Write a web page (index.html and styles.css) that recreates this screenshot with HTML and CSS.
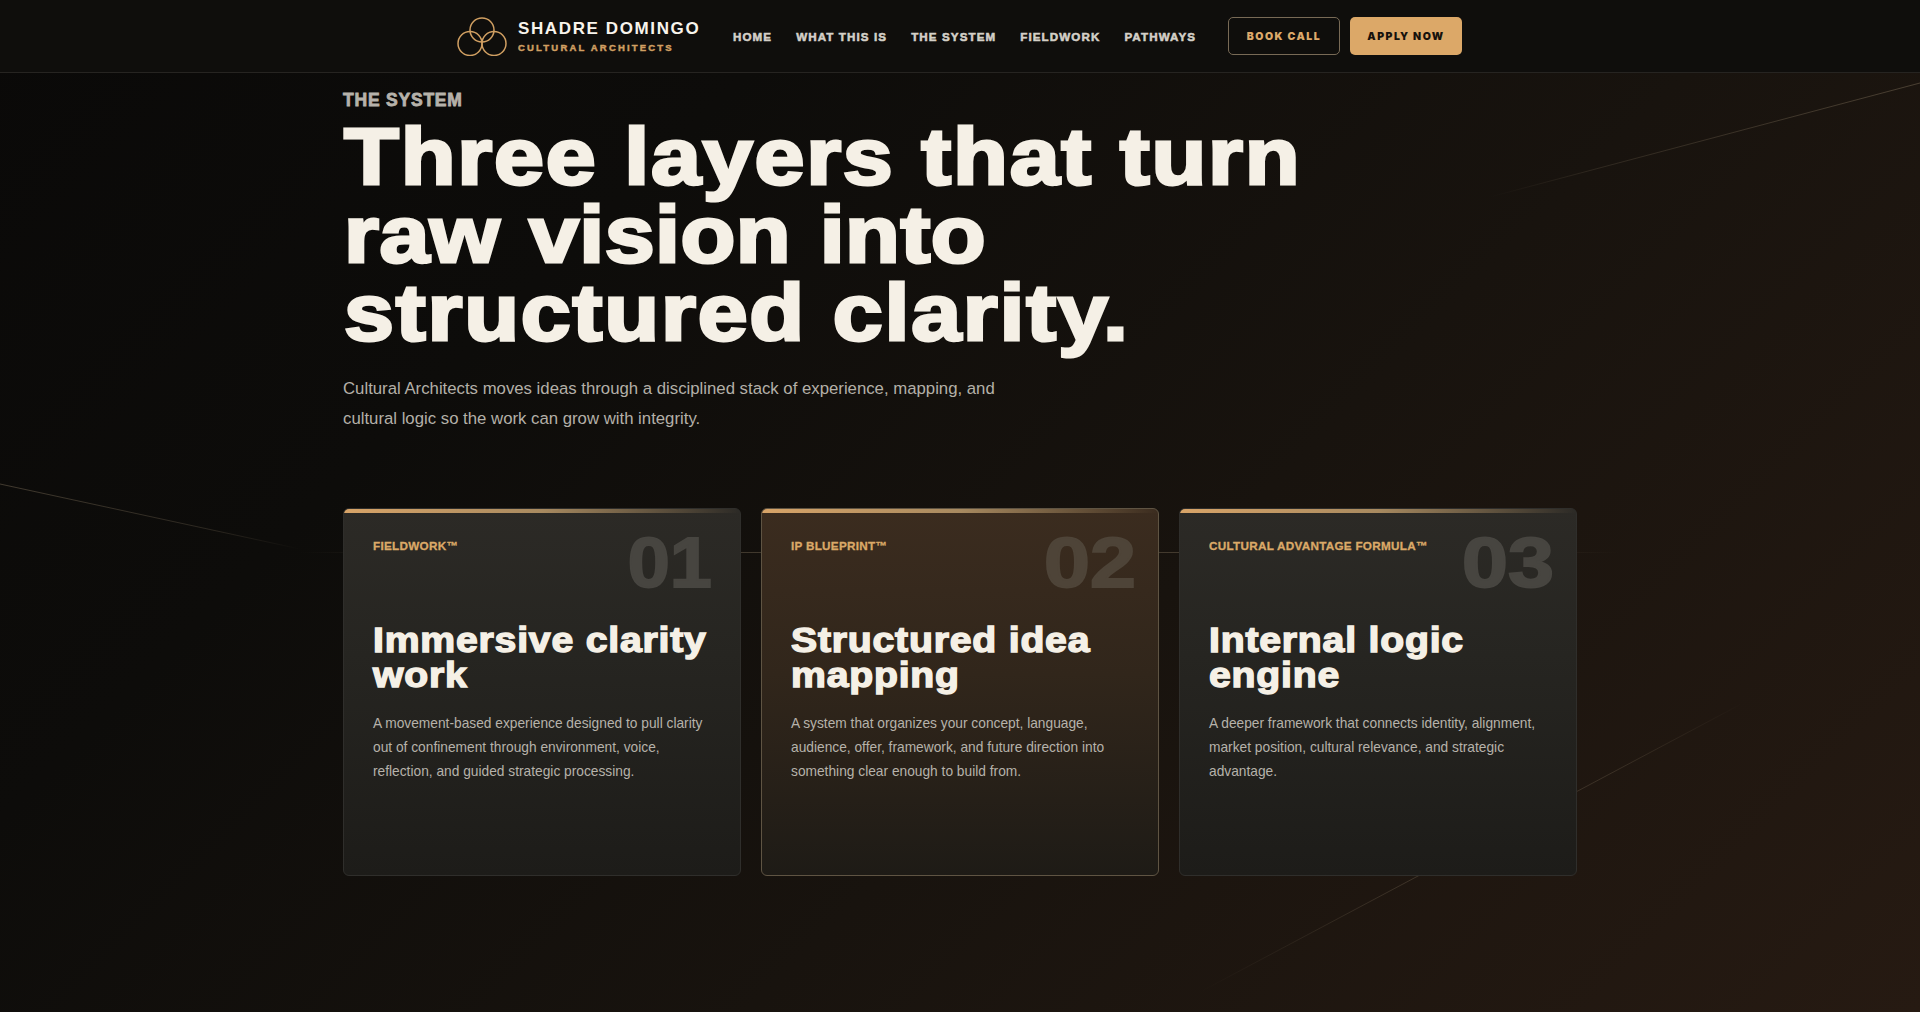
FILE: index.html
```html
<!DOCTYPE html>
<html lang="en">
<head>
<meta charset="utf-8">
<title>Shadre Domingo — The System</title>
<link rel="stylesheet" href="styles.css">
</head>
<body>
<div class="page">
  <svg class="lines" viewBox="0 0 1920 1012" preserveAspectRatio="none" aria-hidden="true">
    <defs>
      <linearGradient id="fadeA" x1="1920" y1="83" x2="1490" y2="197" gradientUnits="userSpaceOnUse">
        <stop offset="0" stop-color="#8a7a62" stop-opacity=".42"/>
        <stop offset=".75" stop-color="#8a7a62" stop-opacity=".2"/>
        <stop offset="1" stop-color="#8a7a62" stop-opacity="0"/>
      </linearGradient>
      <linearGradient id="fadeB" x1="0" y1="484" x2="300" y2="549" gradientUnits="userSpaceOnUse">
        <stop offset="0" stop-color="#8a7a62" stop-opacity=".42"/>
        <stop offset=".7" stop-color="#8a7a62" stop-opacity=".25"/>
        <stop offset="1" stop-color="#8a7a62" stop-opacity="0"/>
      </linearGradient>
      <linearGradient id="fadeC" x1="1200" y1="992" x2="1745" y2="702" gradientUnits="userSpaceOnUse">
        <stop offset="0" stop-color="#8a7a62" stop-opacity="0"/>
        <stop offset=".4" stop-color="#8a7a62" stop-opacity=".3"/>
        <stop offset=".75" stop-color="#8a7a62" stop-opacity=".26"/>
        <stop offset="1" stop-color="#8a7a62" stop-opacity="0"/>
      </linearGradient>
      <linearGradient id="fadeD" x1="300" y1="552" x2="1620" y2="552" gradientUnits="userSpaceOnUse">
        <stop offset="0" stop-color="#8a7a62" stop-opacity="0"/>
        <stop offset=".2" stop-color="#8a7a62" stop-opacity=".38"/>
        <stop offset=".8" stop-color="#8a7a62" stop-opacity=".38"/>
        <stop offset="1" stop-color="#8a7a62" stop-opacity="0"/>
      </linearGradient>
    </defs>
    <line x1="1920" y1="83" x2="1490" y2="197" stroke="url(#fadeA)"/>
    <line x1="0" y1="484" x2="300" y2="549" stroke="url(#fadeB)"/>
    <line x1="1200" y1="992" x2="1745" y2="702" stroke="url(#fadeC)"/>
    <rect x="300" y="552" width="1320" height="1" fill="url(#fadeD)"/>
  </svg>

  <header class="topbar">
    <div class="topbar-inner">
      <a class="brand" href="#">
        <svg class="brand-mark" viewBox="0 0 50 40" aria-hidden="true">
          <circle cx="25" cy="14" r="12"/>
          <circle cx="13" cy="27.5" r="12"/>
          <circle cx="37" cy="27.5" r="12"/>
        </svg>
        <span class="brand-text">
          <span class="brand-name">SHADRE DOMINGO</span>
          <span class="brand-sub">CULTURAL ARCHITECTS</span>
        </span>
      </a>
      <nav class="menu">
        <a href="#">HOME</a>
        <a href="#">WHAT THIS IS</a>
        <a href="#">THE SYSTEM</a>
        <a href="#">FIELDWORK</a>
        <a href="#">PATHWAYS</a>
      </nav>
      <div class="actions">
        <a class="btn btn-ghost" href="#">BOOK CALL</a>
        <a class="btn btn-solid" href="#">APPLY NOW</a>
      </div>
    </div>
  </header>

  <main class="system">
    <p class="eyebrow">THE SYSTEM</p>
    <h1 class="headline">Three layers that turn<br><span class="headline-tight">raw vision into</span><br>structured clarity.</h1>
    <p class="lede">Cultural Architects moves ideas through a disciplined stack of experience, mapping, and cultural logic so the work can grow with integrity.</p>

    <section class="cards">
      <article class="card">
        <span class="card-num card-num-narrow">01</span>
        <p class="card-label">FIELDWORK™</p>
        <h2 class="card-title">Immersive clarity work</h2>
        <p class="card-text">A movement-based experience designed to pull clarity out of confinement through environment, voice, reflection, and guided strategic processing.</p>
      </article>
      <article class="card card-featured">
        <span class="card-num">02</span>
        <p class="card-label">IP BLUEPRINT™</p>
        <h2 class="card-title">Structured idea mapping</h2>
        <p class="card-text">A system that organizes your concept, language, audience, offer, framework, and future direction into something clear enough to build from.</p>
      </article>
      <article class="card">
        <span class="card-num">03</span>
        <p class="card-label">CULTURAL ADVANTAGE FORMULA™</p>
        <h2 class="card-title">Internal logic engine</h2>
        <p class="card-text">A deeper framework that connects identity, alignment, market position, cultural relevance, and strategic advantage.</p>
      </article>
    </section>
  </main>
</div>
</body>
</html>
```

FILE: styles.css
```css
* { box-sizing: border-box; }

html, body {
  margin: 0;
  height: 100%;
  background: #0b0a09;
}

body {
  font-family: "Liberation Sans", Arial, sans-serif;
  color: #f5f0e6;
  overflow: hidden;
}

a { color: inherit; text-decoration: none; }

.page {
  position: relative;
  height: 1012px;
  overflow: hidden;
  background: linear-gradient(135deg, #0a0908 0%, #0d0c0a 28%, #18130e 60%, #261a12 100%);
}

.lines {
  position: absolute;
  inset: 0;
  width: 100%;
  height: 100%;
  pointer-events: none;
}

.topbar {
  position: relative;
  height: 73px;
  background: #0f0e0c;
  border-bottom: 1px solid #262421;
}

.topbar-inner {
  display: flex;
  justify-content: center;
  align-items: center;
  height: 72px;
}

.brand {
  display: flex;
  align-items: center;
  gap: 11px;
  width: 276px;
  margin-left: -1px;
}

.brand-mark {
  flex: none;
  width: 50px;
  height: 40px;
  fill: none;
  stroke: #d09f62;
  stroke-width: 1.5;
}

.brand-text {
  display: flex;
  flex-direction: column;
  gap: 3px;
  margin-top: -1px;
}

.brand-name {
  font-size: 17px;
  line-height: 20px;
  font-weight: 700;
  letter-spacing: .095em;
  color: #f8f4ec;
  white-space: nowrap;
}

.brand-sub {
  font-size: 9.5px;
  line-height: 11px;
  font-weight: 700;
  letter-spacing: .23em;
  color: #d09f62;
  white-space: nowrap;
  -webkit-text-stroke: .45px #d09f62;
}

.menu {
  display: flex;
  gap: 24px;
  width: 495px;
}

.menu a {
  font-size: 11.6px;
  font-weight: 700;
  letter-spacing: .095em;
  color: #d4d0c8;
  white-space: nowrap;
  -webkit-text-stroke: .55px #d4d0c8;
}

.actions {
  display: flex;
  gap: 10px;
}

.btn {
  display: flex;
  align-items: center;
  justify-content: center;
  width: 112px;
  height: 38px;
  border-radius: 5px;
  font-family: "Inter", "Liberation Sans", sans-serif;
  font-size: 10.5px;
  font-weight: 900;
  letter-spacing: .14em;
}

.btn-ghost {
  border: 1px solid #786a56;
  color: #dca96a;
}

.btn-solid {
  background: #dca868;
  color: #17120c;
}

.system {
  position: relative;
  width: 1234px;
  margin: 0 auto;
  padding-top: 17px;
}

.eyebrow {
  margin: 0;
  font-size: 17.5px;
  line-height: 20px;
  font-weight: 700;
  letter-spacing: .045em;
  color: #b6b2aa;
  -webkit-text-stroke: .8px #b6b2aa;
}

.headline {
  margin: 8px 0 0;
  padding-left: 1px;
  width: 1000px;
  font-size: 80px;
  line-height: 78px;
  font-weight: 700;
  letter-spacing: .02em;
  color: #f5f0e6;
  -webkit-text-stroke: 3px #f5f0e6;
  transform: scaleX(1.122);
  transform-origin: left center;
}

.headline-tight {
  letter-spacing: .4px;
  word-spacing: 3px;
}

.lede {
  width: 670px;
  margin: 22px 0 0;
  font-size: 16.75px;
  line-height: 29.5px;
  color: #b4b0a8;
}

.cards {
  display: grid;
  grid-template-columns: repeat(3, 398px);
  gap: 20px;
  margin-top: 75px;
}

.card {
  position: relative;
  height: 368px;
  padding: 30px 29px;
  border: 1px solid #2f2e2b;
  border-radius: 6px;
  overflow: hidden;
  background: linear-gradient(180deg, #2c2a26 0%, #262521 40%, #1d1c19 100%);
}

.card::before {
  content: "";
  position: absolute;
  top: 0;
  left: 0;
  right: 0;
  height: 4px;
  background: linear-gradient(90deg, #d8a468 0%, #a88a60 50%, rgba(168, 138, 96, 0) 100%);
}

.card-featured {
  border-color: #5f5443;
  background: linear-gradient(180deg, #3b2c1f 0%, #31261b 45%, #1e1b16 100%);
}

.card-num {
  position: absolute;
  top: 14px;
  right: 22px;
  font-size: 70px;
  line-height: 80px;
  font-weight: 700;
  color: #474540;
  -webkit-text-stroke: 2px #474540;
  transform: scaleX(1.18);
  transform-origin: right center;
}

.card-num-narrow {
  right: 28px;
  transform: scaleX(1.08);
}

.card-featured .card-num {
  color: #4e4438;
  -webkit-text-stroke-color: #4e4438;
}

.card-label {
  margin: 0;
  font-size: 11.7px;
  line-height: 14px;
  font-weight: 700;
  letter-spacing: .025em;
  color: #dba968;
  -webkit-text-stroke: .3px #dba968;
}

.card-title {
  width: 305px;
  margin: 69px 0 0;
  font-size: 35px;
  line-height: 35px;
  font-weight: 700;
  letter-spacing: .02em;
  color: #f5f0e6;
  -webkit-text-stroke: 1.4px #f5f0e6;
  transform: scaleX(1.12);
  transform-origin: left center;
}

.card-text {
  margin: 20px 0 0;
  font-size: 13.75px;
  line-height: 24px;
  color: #b6b2aa;
}
```
